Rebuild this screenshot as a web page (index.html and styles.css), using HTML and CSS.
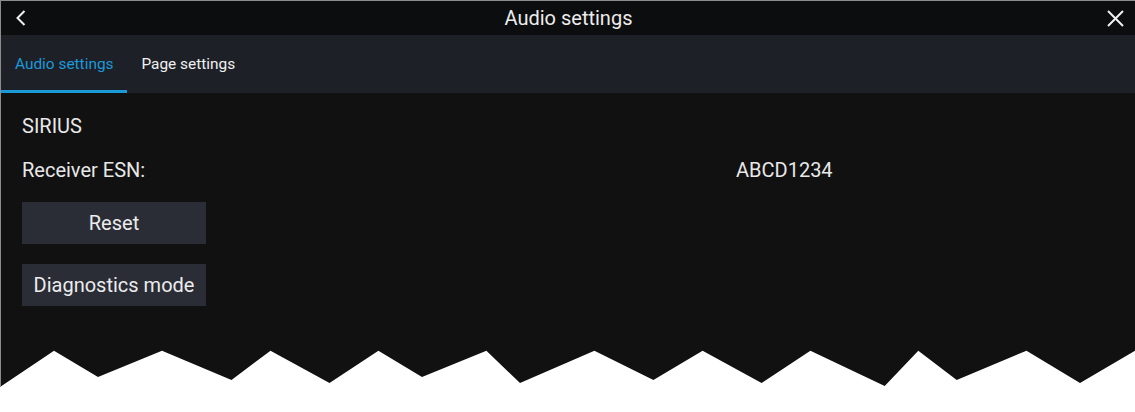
FILE: index.html
```html
<!DOCTYPE html>
<html lang="en">
<head>
  <meta charset="UTF-8">
  <meta name="viewport" content="width=device-width, initial-scale=1.0">
  <title>Audio settings</title>
  <link rel="stylesheet" href="styles.css">
</head>
<body>
  <div class="panel">
    <div class="topbar">
      <button class="icon-btn" aria-label="Back">
        <svg width="12" height="18" viewBox="0 0 12 18"><path d="M9.5 2 L2.5 9 L9.5 16" fill="none" stroke="#f0f0f0" stroke-width="2"/></svg>
      </button>
      <h1 class="title">Audio settings</h1>
      <button class="icon-btn" aria-label="Close">
        <svg width="17" height="17" viewBox="0 0 17 17"><path d="M1 1 L16 16 M16 1 L1 16" fill="none" stroke="#f0f0f0" stroke-width="2"/></svg>
      </button>
    </div>

    <div class="tabs">
      <div class="tab active">Audio settings</div>
      <div class="tab">Page settings</div>
    </div>

    <div class="content">
      <div class="row">SIRIUS</div>
      <div class="row info">
        <span>Receiver ESN:</span>
        <span>ABCD1234</span>
      </div>
      <button class="action-btn">Reset</button>
      <button class="action-btn">Diagnostics mode</button>
    </div>
  </div>
</body>
</html>
```

FILE: styles.css
```css
body {
  margin: 0;
  background: #fff;
  font-family: Roboto, "Noto Sans", sans-serif;
  color: #e8e8e8;
}

.panel {
  height: 387px;
  background: #111111;
  border-top: 1px solid #8c8c8c;
  border-left: 1px solid #8c8c8c;
  clip-path: polygon(0 0, 1135px 0, 1135px 350.7px, 1080px 383px, 1026.5px 350.7px, 956.7px 380px, 918.3px 350.7px, 884.7px 386px, 810.4px 350.7px, 761.6px 383px, 702.6px 350.7px, 653.4px 380px, 594.4px 350.7px, 520px 383px, 486.4px 350.7px, 422px 377px, 378.4px 350.7px, 329.5px 383px, 270.5px 350.7px, 231.5px 380px, 162px 350.7px, 98px 377px, 54px 350.7px, 0 387px);
}

.topbar {
  height: 34px;
  background: #0c0d0f;
  display: flex;
  align-items: center;
  justify-content: space-between;
  padding: 0 9px 0 10px;
}

.icon-btn {
  background: none;
  border: none;
  padding: 0;
  width: 20px;
  height: 20px;
  display: flex;
  align-items: center;
  justify-content: center;
}

.title {
  margin: 0;
  font-size: 20px;
  font-weight: 400;
  color: #ececec;
}

.tabs {
  height: 58px;
  background: #1e2028;
  display: flex;
}

.tab {
  padding: 0 14px;
  display: flex;
  align-items: center;
  font-size: 15.4px;
  color: #f0f0f0;
  border-top: 3px solid transparent;
  border-bottom: 3px solid transparent;
}

.tab.active {
  color: #1b9ad8;
  border-bottom-color: #1b9ad8;
}

.content {
  padding: 21px 21px;
  display: flex;
  flex-direction: column;
  align-items: flex-start;
  gap: 20px;
}

.row {
  font-size: 20px;
  line-height: 24px;
}

.info {
  display: grid;
  grid-template-columns: 714px 1fr;
}

.action-btn {
  width: 184px;
  height: 42px;
  background: #2a2d36;
  border: none;
  color: #ececec;
  font-family: Roboto, "Noto Sans", sans-serif;
  font-size: 20px;
  padding: 0;
}
```
